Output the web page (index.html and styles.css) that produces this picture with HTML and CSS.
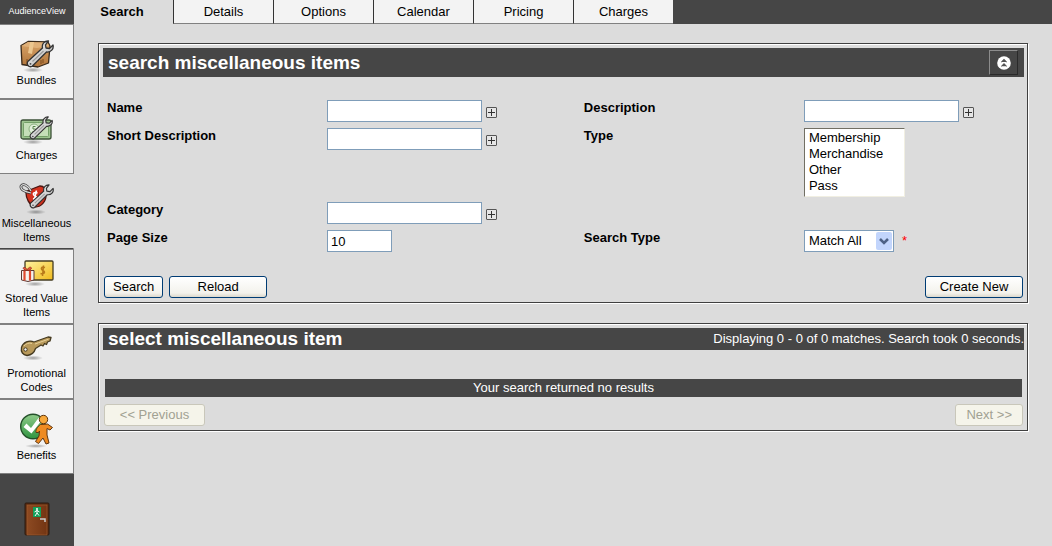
FILE: index.html
```html
<!DOCTYPE html>
<html lang="en">
<head>
    <meta charset="UTF-8">
    <meta name="viewport" content="width=device-width, initial-scale=1.0">
    <title>AudienceView - Miscellaneous Items</title>
    <link rel="stylesheet" href="styles.css">
</head>
<body>
    <!-- Shapes used by more than one icon -->
    <svg class="defs" width="0" height="0" aria-hidden="true">
        <defs>
            <linearGradient id="steel" x1="0" y1="0" x2="1" y2="1">
                <stop offset="0" stop-color="#f8f8f8"/>
                <stop offset="1" stop-color="#b0b0b0"/>
            </linearGradient>
            <linearGradient id="box" x1="0" y1="0" x2="0" y2="1">
                <stop offset="0" stop-color="#d9a468"/>
                <stop offset="1" stop-color="#b0743a"/>
            </linearGradient>
            <linearGradient id="gold" x1="0" y1="0" x2="1" y2="1">
                <stop offset="0" stop-color="#fff3a0"/>
                <stop offset="1" stop-color="#efb91c"/>
            </linearGradient>
            <linearGradient id="green" x1="0" y1="0" x2="0" y2="1">
                <stop offset="0" stop-color="#8fcb8a"/>
                <stop offset="1" stop-color="#2f9440"/>
            </linearGradient>
            <linearGradient id="wood" x1="0" y1="0" x2="1" y2="0">
                <stop offset="0" stop-color="#8d4a22"/>
                <stop offset="1" stop-color="#733513"/>
            </linearGradient>
            <radialGradient id="shade">
                <stop offset="0" stop-color="#000" stop-opacity=".35"/>
                <stop offset="1" stop-color="#000" stop-opacity="0"/>
            </radialGradient>
            <symbol id="wrench" viewBox="0 0 28 28">
                <path d="M22.500 1C18.500 .8 15.500 4 16.500 8L1.800 21.500C.2 24.500 3 28 6.200 26.200L20.500 12C25 12.500 28 9 27 5L23.500 8.500L20 8L19.500 4.800Z" fill="url(#steel)" stroke="#333" stroke-width="1.300" stroke-linejoin="round"/>
                <path d="M6.500 21.500L17.500 11" stroke="#999" stroke-width="1.200" fill="none"/>
                <circle cx="4.500" cy="23.800" r=".9" fill="#444"/>
            </symbol>
        </defs>
    </svg>

    <div class="app">
        <nav class="sidebar" aria-label="Modules">
            <div class="brand">AudienceView</div>
            <a class="side-item" href="#bundles">
                <svg class="side-icon" viewBox="0 0 36 36" aria-hidden="true">
                    <ellipse cx="14" cy="33" rx="10" ry="2.500" fill="url(#shade)"/>
                    <path d="M2 8.500L9 4.500L29 5L31 9L29.500 26L19 30L3 27.500Z" fill="url(#box)" stroke="#3a2a1a" stroke-width="1.300" stroke-linejoin="round"/>
                    <path d="M2.500 9L9 5L28.500 5.500L30 9L18 11Z" fill="#e0b078"/>
                    <path d="M11 5L15 5L13 17L9 16Z" fill="#ecc68e"/>
                    <path d="M8 22v5M10 23v4M12 22v5M22 23v4M24 22v4" stroke="#7b4a1c"/>
                    <use href="#wrench" x="7" y="3" width="28" height="28"/>
                </svg>
                <span>Bundles</span>
            </a>
            <a class="side-item" href="#charges">
                <svg class="side-icon" viewBox="0 0 36 36" aria-hidden="true">
                    <ellipse cx="14" cy="30" rx="10" ry="2.500" fill="url(#shade)"/>
                    <rect x="2" y="8" width="30" height="19" rx="2" fill="#9dc48f" stroke="#3d5238" stroke-width="1.300"/>
                    <rect x="4.500" y="10.500" width="25" height="14" rx="1" fill="#c5dfb8" stroke="#74a068"/>
                    <circle cx="15" cy="17" r="5" fill="#e3f0dc" stroke="#8bb27f"/>
                    <path d="M16.500 14.500h-2.500v2.500h2.500v2.500h-3" fill="none" stroke="#568449"/>
                    <use href="#wrench" x="10" y="4" width="24" height="24"/>
                </svg>
                <span>Charges</span>
            </a>
            <a class="side-item active" href="#misc" aria-current="page">
                <svg class="side-icon" viewBox="0 0 36 36" aria-hidden="true">
                    <ellipse cx="17" cy="32" rx="10" ry="2.500" fill="url(#shade)"/>
                    <path d="M8 11L13 9L21 6C25 6 27 10 27 15C27 22 22 27 16 27C10 25 7 18 7 13Z" fill="#d2321e" stroke="#4b1510" stroke-width="1.300"/>
                    <path d="M12 13C7 12 1 10 2 6C4 3 9 5 12 11" fill="none" stroke="#333" stroke-width="2.600"/>
                    <path d="M12 13C7 12 1 10 2 6C4 3 9 5 12 11" fill="none" stroke="#ddd" stroke-width="1.200"/>
                    <path d="M18.500 13C15 11.500 13 14 15.500 15.500C18.500 17 18 19.500 14 18.500M17.500 10.500L15 21" fill="none" stroke="#fff" stroke-width="1.500"/>
                    <use href="#wrench" x="10" y="4" width="25" height="25"/>
                </svg>
                <span>Miscellaneous Items</span>
            </a>
            <a class="side-item" href="#stored">
                <svg class="side-icon" viewBox="0 0 36 36" aria-hidden="true">
                    <ellipse cx="16" cy="29" rx="10" ry="2.500" fill="url(#shade)"/>
                    <rect x="6" y="6" width="28" height="19" rx="1" fill="url(#gold)" stroke="#443c22" stroke-width="1.300"/>
                    <path d="M26 12.500C22.500 11 21 14 24 15.500C27 17 25 19.500 21.500 18.500M24.500 10.500L23.500 21" fill="none" stroke="#b8791a" stroke-width="1.500"/>
                    <path d="M2.500 15.500H15V25L9 26.500L2.500 25Z" fill="#f5f2ee" stroke="#5b3a35"/>
                    <path d="M5.500 15.500v10M11 15.500v10" stroke="#e04a2f" stroke-width="2.200"/>
                    <path d="M8 15.500C4 15 3 12 5.500 12.500C7 12.500 8 14 8 15.500C9 12 12 11.500 12.500 13C12.500 14.500 10 15.500 8 15.500Z" fill="#e85b3c" stroke="#8c2818" stroke-width=".7"/>
                </svg>
                <span>Stored Value Items</span>
            </a>
            <a class="side-item" href="#promo">
                <svg class="side-icon" viewBox="0 0 36 36" aria-hidden="true">
                    <ellipse cx="14" cy="28" rx="10" ry="2.500" fill="url(#shade)"/>
                    <path d="M15 12L29 7L32 7.500L31 11L28.500 12L27.500 14.500L25.500 13.500L24 16L22 15L16.500 18.500C15.500 22 12 25 8 25.500C4 25 1.500 22 2.500 17.500C4 12.500 10 9.500 15 12Z" fill="#b8995a" stroke="#453a20" stroke-width="1.300" stroke-linejoin="round"/>
                    <path d="M16 14L29.500 9.200M5 16C7 13.500 10 12.500 13 13.500" fill="none" stroke="#e5cf98"/>
                    <circle cx="6.500" cy="19.500" r="1.700" fill="#f3f3f3" stroke="#453a20"/>
                </svg>
                <span>Promotional Codes</span>
            </a>
            <a class="side-item" href="#benefits">
                <svg class="side-icon" viewBox="0 0 36 36" aria-hidden="true">
                    <ellipse cx="17" cy="34" rx="11" ry="2" fill="url(#shade)"/>
                    <circle cx="14" cy="14.500" r="12.300" fill="url(#green)" stroke="#24502a" stroke-width="1.400"/>
                    <path d="M4.500 15L7.500 11.500L12 16L19.500 6L22.500 8.500L12.500 21.500Z" fill="#fff"/>
                    <path d="M21.500 12.500C18 15 16.500 18 17 20.500L19.500 20.500L20.500 19L20 24L16.500 29.500L19.500 31.500L24 26L27 32L30 31L28 23L28 16.500L31 18L33.500 15.500L28.500 12Z" fill="#ee8b22" stroke="#5d3510" stroke-linejoin="round"/>
                    <circle cx="24.500" cy="7.500" r="4.200" fill="#f7a83a" stroke="#5d3510"/>
                </svg>
                <span>Benefits</span>
            </a>
            <a class="exit" href="#logout" aria-label="Log out">
                <svg width="26" height="34" viewBox="0 0 26 34" aria-hidden="true">
                    <rect x="1" y="1" width="24" height="32" rx="1" fill="#5b2a10" stroke="#2b1a10"/>
                    <rect x="3" y="3" width="20" height="30" fill="url(#wood)" stroke="#a4602f" stroke-width=".6"/>
                    <rect x="9" y="5" width="8" height="10" fill="#12a05a"/>
                    <circle cx="13" cy="7" r="1" fill="#fff"/>
                    <path d="M13 8v3M10.500 10L13 8.500L15.500 10M13 11L11 14M13 11L15 13.500" fill="none" stroke="#fff"/>
                    <path d="M16 17h5v3" fill="none" stroke="#ccc" stroke-width="1.500"/>
                </svg>
            </a>
        </nav>

        <main class="main">
            <nav class="tabs" aria-label="Sections">
                <a class="tab active" href="#search" aria-current="page">Search</a>
                <a class="tab" href="#details">Details</a>
                <a class="tab" href="#options">Options</a>
                <a class="tab" href="#calendar">Calendar</a>
                <a class="tab" href="#pricing">Pricing</a>
                <a class="tab" href="#tab-charges">Charges</a>
            </nav>

            <div class="content">
                <form class="panel">
                    <div class="panel-head">
                        <h2>search miscellaneous items</h2>
                        <button type="button" class="collapse" aria-label="Collapse">
                            <svg width="14" height="14" viewBox="0 0 14 14" aria-hidden="true">
                                <circle cx="7" cy="7" r="6.800" fill="#fff"/>
                                <path d="M7 2.800L10 6H4ZM7 7L10 10.200H4Z" fill="#555"/>
                                <path d="M4.500 6L7 4L9.500 6M4.500 10.200L7 8.200L9.500 10.200" fill="none" stroke="#555"/>
                            </svg>
                        </button>
                    </div>

                    <div class="fields">
                        <label for="name">Name</label>
                        <div class="field">
                            <input type="text" id="name">
                            <button type="button" class="plus" aria-label="Add name"></button>
                        </div>
                        <label for="description">Description</label>
                        <div class="field">
                            <input type="text" id="description">
                            <button type="button" class="plus" aria-label="Add description"></button>
                        </div>

                        <label for="short">Short Description</label>
                        <div class="field">
                            <input type="text" id="short">
                            <button type="button" class="plus" aria-label="Add short description"></button>
                        </div>
                        <label for="type">Type</label>
                        <select id="type" class="listbox" size="4" multiple>
                            <option>Membership</option>
                            <option>Merchandise</option>
                            <option>Other</option>
                            <option>Pass</option>
                        </select>

                        <label for="category">Category</label>
                        <div class="field wide">
                            <input type="text" id="category">
                            <button type="button" class="plus" aria-label="Add category"></button>
                        </div>

                        <label for="pageSize">Page Size</label>
                        <div class="field">
                            <input type="text" id="pageSize" class="short" value="10">
                        </div>
                        <label for="searchType">Search Type</label>
                        <div class="field">
                            <div class="dropdown">
                                <select id="searchType">
                                    <option>Match All</option>
                                    <option>Match Any</option>
                                </select>
                                <svg class="arrow" width="16" height="18" viewBox="0 0 16 18" aria-hidden="true">
                                    <rect width="16" height="18" rx="2" fill="#c2d5fc"/>
                                    <path d="M4 7L8 11L12 7" fill="none" stroke="#4d6185" stroke-width="2.500"/>
                                </svg>
                            </div>
                            <span class="required">*</span>
                        </div>
                    </div>

                    <div class="actions">
                        <button type="submit" class="btn">Search</button>
                        <button type="reset" class="btn btn-wide">Reload</button>
                        <button type="button" class="btn btn-wide push">Create New</button>
                    </div>
                </form>

                <section class="panel">
                    <div class="panel-head compact">
                        <h2>select miscellaneous item</h2>
                        <span class="summary">Displaying 0 - 0 of 0 matches. Search took 0 seconds.</span>
                    </div>
                    <table class="results">
                        <tbody>
                            <tr><td>Your search returned no results</td></tr>
                        </tbody>
                    </table>
                    <div class="actions">
                        <button type="button" class="btn btn-prev" disabled>&lt;&lt; Previous</button>
                        <button type="button" class="btn push" disabled>Next &gt;&gt;</button>
                    </div>
                </section>
            </div>
        </main>
    </div>
</body>
</html>
```

FILE: styles.css
```css
* {
    box-sizing: border-box;
}
body {
    margin: 0;
    background: #dcdcdc;
    color: #000;
    font-family: "Liberation Sans", Arial, sans-serif;
    font-size: 13px;
    line-height: 16px;
}
a {
    color: inherit;
    text-decoration: none;
}
button, input, select {
    font: inherit;
    color: inherit;
    margin: 0;
}
.defs {
    position: absolute;
}
.app {
    display: flex;
    min-height: 100vh;
}

/* Sidebar */
.sidebar {
    display: flex;
    flex-direction: column;
    flex: none;
    width: 74px;
    background: #464646;
    font-size: 11px;
    line-height: 14px;
}
.brand {
    height: 24px;
    color: #fff;
    font-size: 9px;
    line-height: 22px;
    text-align: center;
}
.side-item {
    display: flex;
    flex-direction: column;
    align-items: center;
    justify-content: center;
    height: 75px;
    border: 1px solid #808080;
    border-left: none;
    background: #f3f3f3;
    text-align: center;
}
.side-item.active {
    border-color: #dcdcdc;
    border-bottom-color: #464646;
    background: #dcdcdc;
}
.side-icon {
    flex: none;
    width: 36px;
    height: 36px;
}
.exit {
    margin: auto auto 10px;
    line-height: 0;
}

/* Tabs */
.main {
    flex: 1;
    min-width: 0;
}
.tabs {
    display: flex;
    height: 24px;
    background: #464646;
}
.tab {
    width: 100px;
    border-left: 1px solid #333;
    border-bottom: 1px solid #808080;
    background: #f3f3f3;
    line-height: 23px;
    text-align: center;
}
.tab.active {
    width: 99px;
    border-color: #dcdcdc;
    background: #dcdcdc;
    font-weight: bold;
    line-height: 24px;
    padding-right: 4px;
}

/* Panels */
.content {
    display: flex;
    flex-direction: column;
    gap: 20px;
    padding: 19px 24px;
}
.panel {
    padding: 4px 3px 4px 4px;
    border: 1px solid #404040;
    box-shadow: 1px 1px 0 #fff, inset 1px 1px 0 #fff;
}
.panel-head {
    display: flex;
    align-items: center;
    justify-content: space-between;
    height: 29px;
    padding-left: 5px;
    padding-right: 6px;
    background: #464646;
    color: #fff;
}
.panel-head h2 {
    margin: 0;
    font-size: 19px;
    line-height: 22px;
}
.panel-head.compact {
    height: 22px;
    padding-right: 0;
}
.collapse {
    display: flex;
    align-items: center;
    justify-content: center;
    width: 29px;
    height: 25px;
    padding: 0;
    border: 1px solid;
    border-color: #8c8c8c #2a2a2a #2a2a2a #8c8c8c;
    background: #464646;
}

/* Search form */
.fields {
    display: grid;
    grid-template-columns: 24% 28% 24% 24%;
    grid-template-rows: 28px 74px 28px 28px;
    align-items: start;
    padding: 23px 0 0 4px;
}
.fields label {
    font-weight: bold;
}
.field {
    display: flex;
    align-items: center;
    gap: 4px;
}
.field.wide {
    grid-column: span 3;
}
.field input {
    width: 155px;
    height: 22px;
    padding: 0 3px;
    border: 1px solid #7f9db9;
    background: #fff;
}
.field input.short {
    width: 65px;
}
.plus {
    width: 11px;
    height: 11px;
    margin-top: 3px;
    padding: 0;
    border: 1px solid #555;
    border-radius: 1px;
    background:
        linear-gradient(#333, #333) center / 7px 1px no-repeat,
        linear-gradient(#333, #333) center / 1px 7px no-repeat,
        #e6e6e6;
}
.listbox {
    width: 101px;
    height: 69px;
    padding: 1px 0;
    border: 1px solid;
    border-color: #716f64 #f1efe2 #f1efe2 #716f64;
    border-radius: 0;
    background: #fff;
    overflow: hidden;
}
.listbox option {
    min-height: 16px;
    padding: 0 4px;
    line-height: 16px;
}
.dropdown {
    position: relative;
}
.dropdown select {
    display: block;
    appearance: none;
    width: 90px;
    height: 22px;
    padding: 0 4px;
    border: 1px solid #7f9db9;
    border-radius: 0;
    background: #fff;
}
.arrow {
    position: absolute;
    top: 2px;
    right: 2px;
    pointer-events: none;
}
.required {
    margin-left: 4px;
    color: #f00;
}

/* Buttons */
.actions {
    display: flex;
    gap: 6px;
    padding: 0 1px;
}
.fields + .actions {
    padding-top: 18px;
}
.btn {
    height: 22px;
    padding: 0 8px;
    border: 1px solid #003c74;
    border-radius: 3px;
    background: linear-gradient(#fff, #f3f2ec 80%, #dcd8cc);
}
.btn-wide {
    min-width: 98px;
}
.btn-prev {
    min-width: 101px;
}
.btn.push {
    margin-left: auto;
}
.btn:disabled {
    padding: 0 10px;
    border-color: #c9c7ba;
    background: #f5f4ea;
    color: #a1a192;
}

/* Results */
.results {
    width: calc(100% - 4px);
    margin: 29px 2px 7px;
    border-collapse: collapse;
    background: #464646;
    color: #fff;
    text-align: center;
}
.results td {
    padding: 1px 0;
}
```
